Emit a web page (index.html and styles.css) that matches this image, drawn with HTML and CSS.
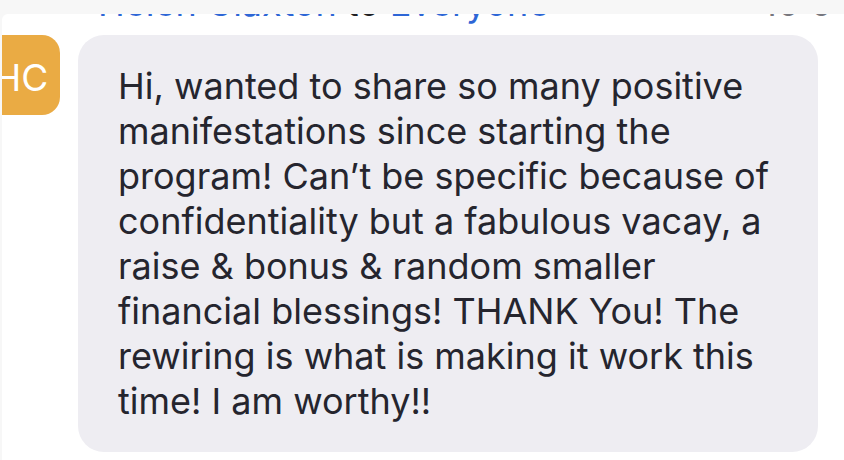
FILE: index.html
```html
<!DOCTYPE html>
<html lang="en">
<head>
    <meta charset="UTF-8">
    <meta name="viewport" content="width=device-width, initial-scale=1.0">
    <title>Chat</title>
    <link rel="stylesheet" href="styles.css">
</head>
<body>
    <div class="chat-panel">
        <!-- sender line, scrolled partly under the top bar -->
        <div class="msg-header">
            <span class="sender">Helen Claxton</span>
            <span class="to">to</span>
            <span class="sender">Everyone</span>
            <span class="msg-time">10:04</span>
        </div>

        <div class="msg-row">
            <div class="avatar">HC</div>
            <div class="bubble">
                Hi, wanted to share so many positive<br>
                manifestations since starting the<br>
                program! Can’t be specific because of<br>
                confidentiality but a fabulous vacay, a<br>
                raise &amp; bonus &amp; random smaller<br>
                financial blessings! THANK You! The<br>
                rewiring is what is making it work this<br>
                time! I am worthy!!
            </div>
        </div>
    </div>
</body>
</html>
```

FILE: styles.css
```css
* {
    margin: 0;
    padding: 0;
    box-sizing: border-box;
}

body {
    font-family: Inter, 'Liberation Sans', Arial, sans-serif;
    background: #f7f7f7;
    height: 100vh;
    overflow: hidden;
}

.chat-panel {
    margin: 14px 0 0 2px;
    height: calc(100vh - 14px);
    background: #fff;
    border-top-left-radius: 6px;
    overflow: hidden;
    font-size: 36px;
    line-height: 45px;
}

/* header line */
.msg-header {
    display: flex;
    align-items: baseline;
    gap: 10px;
    margin: -33px -12px 0 0;
    padding-left: 96px;
}

.sender {
    color: #2d66d6;
}

.to {
    color: #1f1f24;
}

.msg-time {
    margin-left: auto;
    color: #77777e;
}

/* message */
.msg-row {
    display: flex;
    align-items: flex-start;
    gap: 18px;
    margin-top: 9px;
}

.avatar {
    width: 80px;
    height: 80px;
    margin-left: -22px;
    padding: 6px 0 0 2px;
    flex-shrink: 0;
    background: #eaab44;
    border-radius: 18px;
    color: #fff;
    font-size: 37px;
    line-height: 74px;
    text-align: center;
}

.bubble {
    width: 740px;
    padding: 29px 20px 28px 40px;
    background: #eeedf2;
    border-radius: 26px;
    color: #25252e;
    white-space: nowrap;
}
```
